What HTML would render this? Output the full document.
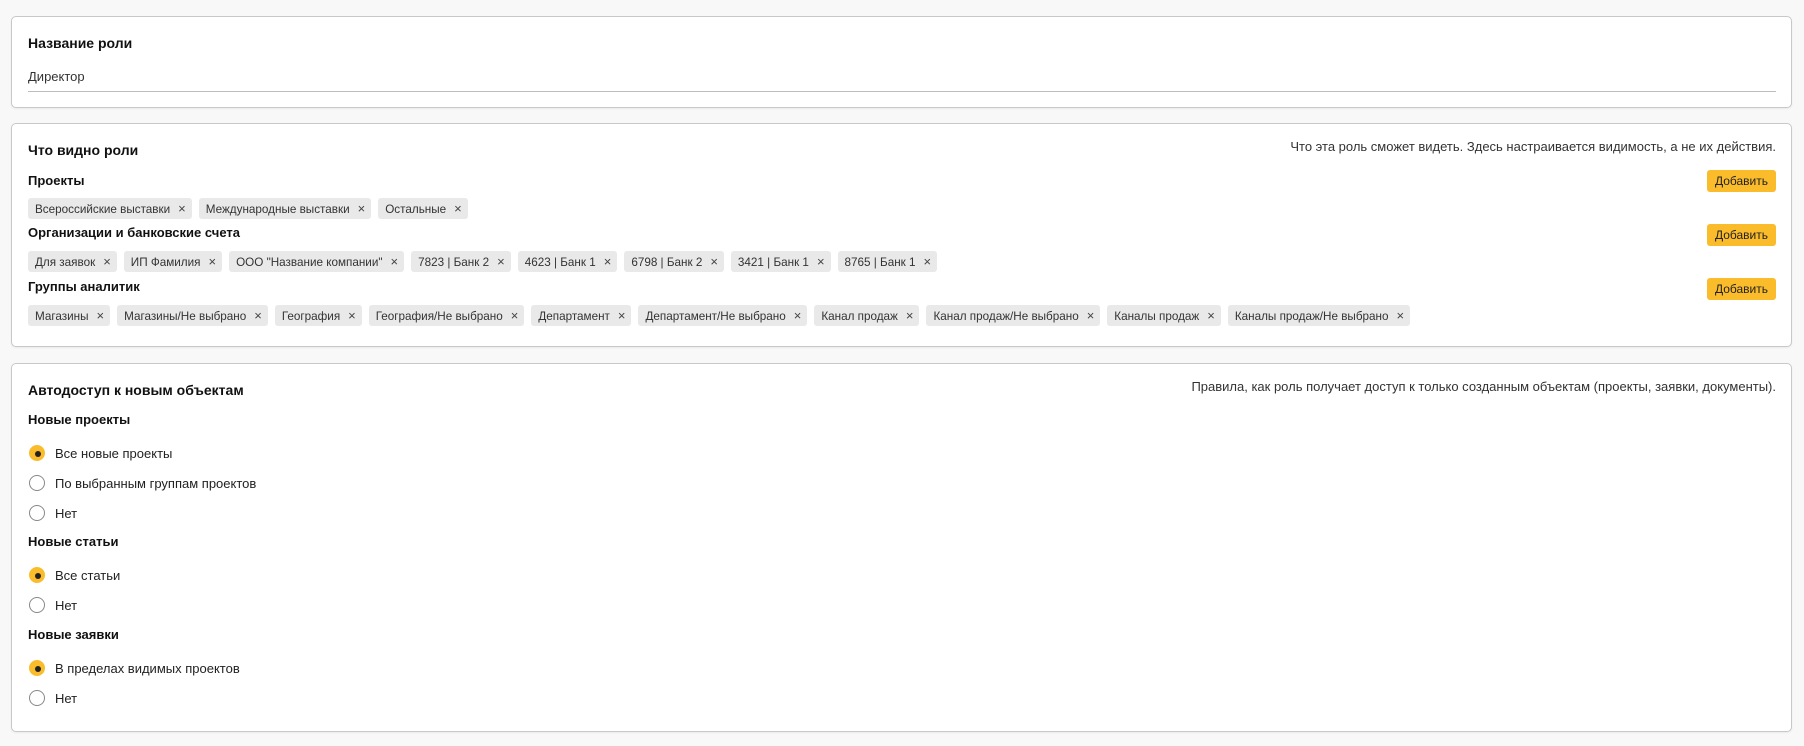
<!DOCTYPE html>
<html><head><meta charset="utf-8">
<style>
*{box-sizing:border-box;margin:0;padding:0}
body{width:1804px;height:746px;background:#f8f8f8;font-family:"Liberation Sans","DejaVu Sans",sans-serif;color:#1a1a1a;position:relative;overflow:hidden}
.card{position:absolute;left:11px;width:1781px;background:#fff;border:1px solid #c8c8c8;border-radius:5px;box-shadow:0 1px 2px rgba(0,0,0,.06)}
.abs{position:absolute;white-space:nowrap}
.h1{font-size:14px;font-weight:bold;color:#111}
.h2{font-size:13px;font-weight:bold;color:#111}
.txt{font-size:13px;color:#333}
.desc{font-size:13px;color:#333;right:15px}
.btn{position:absolute;right:15px;width:69px;height:22px;background:#fbbc2c;border-radius:3px;font-size:12px;color:#222;text-align:center;line-height:22px}
.row{position:absolute;left:16px;display:flex;gap:7px}
.chip{height:21px;background:#e9e9ea;border-radius:3px;font-size:11.7px;color:#333;line-height:21px;padding:0 6px 0 7px;white-space:nowrap}
.chip b{font-weight:normal;margin-left:8px;font-size:13px;color:#444}
.radio{position:absolute;left:17px;height:18px;display:flex;align-items:center;font-size:13px;color:#222}
.radio i{width:16px;height:16px;border-radius:50%;border:1px solid #888;margin-right:10px;display:inline-block;position:relative}
.radio i.on{background:#fbbc2c;border-color:#fbbc2c}
.radio i.on:after{content:"";position:absolute;left:5px;top:5px;width:6px;height:6px;border-radius:50%;background:#222}
</style></head><body>

<div class="card" style="top:16px;height:92px">
  <div class="abs h1" style="left:16px;top:18px">Название роли</div>
  <div class="abs txt" style="left:16px;top:52px">Директор</div>
  <div class="abs" style="left:16px;right:15px;top:74px;height:1px;background:#bdbdbd"></div>
</div>

<div class="card" style="top:123px;height:224px">
  <div class="abs h1" style="left:16px;top:18px">Что видно роли</div>
  <div class="abs desc" style="top:15px">Что эта роль сможет видеть. Здесь настраивается видимость, а не их действия.</div>
  <div class="abs h2" style="left:16px;top:49px">Проекты</div>
  <div class="btn" style="top:46px">Добавить</div>
  <div class="row" style="top:74px">
    <span class="chip">Всероссийские выставки<b>×</b></span>
    <span class="chip">Международные выставки<b>×</b></span>
    <span class="chip">Остальные<b>×</b></span>
  </div>
  <div class="abs h2" style="left:16px;top:101px">Организации и банковские счета</div>
  <div class="btn" style="top:100px">Добавить</div>
  <div class="row" style="top:127px">
    <span class="chip">Для заявок<b>×</b></span>
    <span class="chip">ИП Фамилия<b>×</b></span>
    <span class="chip">ООО "Название компании"<b>×</b></span>
    <span class="chip">7823 | Банк 2<b>×</b></span>
    <span class="chip">4623 | Банк 1<b>×</b></span>
    <span class="chip">6798 | Банк 2<b>×</b></span>
    <span class="chip">3421 | Банк 1<b>×</b></span>
    <span class="chip">8765 | Банк 1<b>×</b></span>
  </div>
  <div class="abs h2" style="left:16px;top:155px">Группы аналитик</div>
  <div class="btn" style="top:154px">Добавить</div>
  <div class="row" style="top:181px">
    <span class="chip">Магазины<b>×</b></span>
    <span class="chip">Магазины/Не выбрано<b>×</b></span>
    <span class="chip">География<b>×</b></span>
    <span class="chip">География/Не выбрано<b>×</b></span>
    <span class="chip">Департамент<b>×</b></span>
    <span class="chip">Департамент/Не выбрано<b>×</b></span>
    <span class="chip">Канал продаж<b>×</b></span>
    <span class="chip">Канал продаж/Не выбрано<b>×</b></span>
    <span class="chip">Каналы продаж<b>×</b></span>
    <span class="chip">Каналы продаж/Не выбрано<b>×</b></span>
  </div>
</div>

<div class="card" style="top:363px;height:369px">
  <div class="abs h1" style="left:16px;top:18px">Автодоступ к новым объектам</div>
  <div class="abs desc" style="top:15px">Правила, как роль получает доступ к только созданным объектам (проекты, заявки, документы).</div>
  <div class="abs h2" style="left:16px;top:48px">Новые проекты</div>
  <div class="radio" style="top:80px"><i class="on"></i>Все новые проекты</div>
  <div class="radio" style="top:110px"><i></i>По выбранным группам проектов</div>
  <div class="radio" style="top:140px"><i></i>Нет</div>
  <div class="abs h2" style="left:16px;top:170px">Новые статьи</div>
  <div class="radio" style="top:202px"><i class="on"></i>Все статьи</div>
  <div class="radio" style="top:232px"><i></i>Нет</div>
  <div class="abs h2" style="left:16px;top:263px">Новые заявки</div>
  <div class="radio" style="top:295px"><i class="on"></i>В пределах видимых проектов</div>
  <div class="radio" style="top:325px"><i></i>Нет</div>
</div>

</body></html>
